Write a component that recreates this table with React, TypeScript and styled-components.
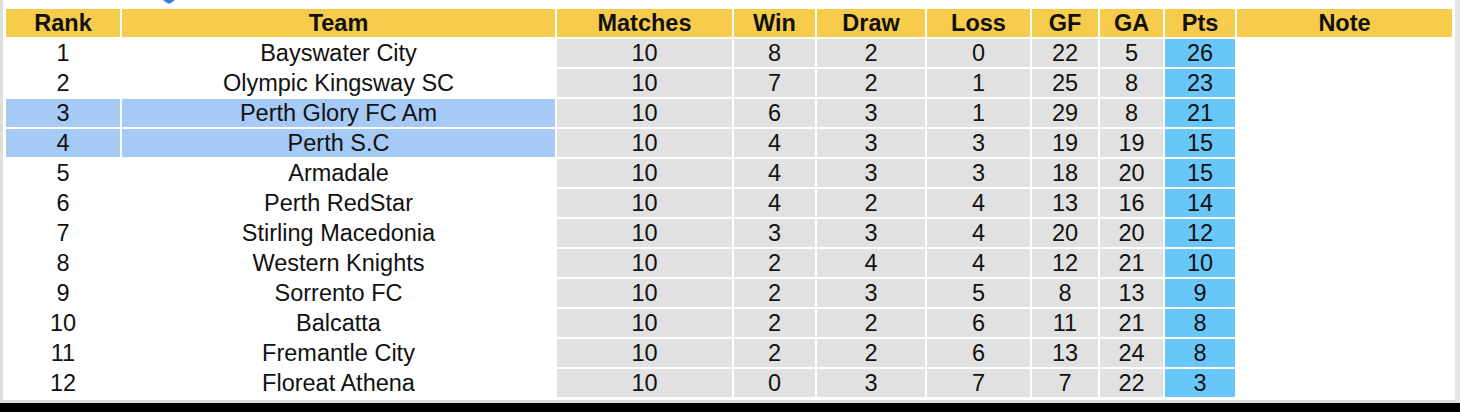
import React from 'react';
import styled, { createGlobalStyle } from 'styled-components';

const GlobalStyle = createGlobalStyle`
  html, body {
    margin: 0;
    padding: 0;
    background: #fff;
  }
  body {
    font-family: 'Liberation Sans', Arial, sans-serif;
    color: #111;
  }
`;

type Tone = 'plain' | 'grey' | 'pick' | 'points' | 'head';

const tones: Record<Tone, string> = {
  plain: '#ffffff',
  grey: '#e1e1e1',
  pick: '#a6c9f6',
  points: '#69c6f8',
  head: '#f7cb4b',
};

const Page = styled.div`
  display: flex;
  flex-direction: column;
  width: 1460px;
  height: 412px;
  overflow: hidden;
`;

const Frame = styled.div`
  display: flex;
  flex-direction: column;
  height: 400px;
  border-left: 3px solid #dedede;
  border-right: 5px solid #e6e6e3;
  border-bottom: 3px solid #dfdfdf;
  padding-left: 3px;
`;

const TopStrip = styled.div`
  height: 9px;
  padding-left: 157px;
  display: flex;
  align-items: flex-start;
`;

const Standings = styled.div`
  display: grid;
  grid-template-columns: 114px 433px 175px 81px 108px 103px 66px 63px 70px 215px;
  grid-auto-rows: 28px;
  gap: 2px;
`;

const Cell = styled.div<{ $tone: Tone; $bold?: boolean }>`
  display: flex;
  align-items: center;
  justify-content: center;
  padding-top: 2px;
  box-sizing: border-box;
  background: ${(p) => tones[p.$tone]};
  font-size: 23.5px;
  font-weight: ${(p) => (p.$bold ? 700 : 400)};
  line-height: 1;
  white-space: nowrap;
`;

const BlackBar = styled.div`
  flex: 1;
  background: #000;
`;

const headers = ['Rank', 'Team', 'Matches', 'Win', 'Draw', 'Loss', 'GF', 'GA', 'Pts', 'Note'];

type Row = [string, number, number, number, number, number, number, number];

const rows: Row[] = [
  ['Bayswater City', 10, 8, 2, 0, 22, 5, 26],
  ['Olympic Kingsway SC', 10, 7, 2, 1, 25, 8, 23],
  ['Perth Glory FC Am', 10, 6, 3, 1, 29, 8, 21],
  ['Perth S.C', 10, 4, 3, 3, 19, 19, 15],
  ['Armadale', 10, 4, 3, 3, 18, 20, 15],
  ['Perth RedStar', 10, 4, 2, 4, 13, 16, 14],
  ['Stirling Macedonia', 10, 3, 3, 4, 20, 20, 12],
  ['Western Knights', 10, 2, 4, 4, 12, 21, 10],
  ['Sorrento FC', 10, 2, 3, 5, 8, 13, 9],
  ['Balcatta', 10, 2, 2, 6, 11, 21, 8],
  ['Fremantle City', 10, 2, 2, 6, 13, 24, 8],
  ['Floreat Athena', 10, 0, 3, 7, 7, 22, 3],
];

const highlighted = new Set([3, 4]);

export default function App() {
  return (
    <Page>
      <GlobalStyle />
      <Frame>
        <TopStrip>
          <svg width="12" height="4" viewBox="0 0 12 4">
            <path d="M0 0 H12 L7.5 3.2 Q6 4 4.5 3.2 Z" fill="#3a7bd5" />
          </svg>
        </TopStrip>
        <Standings>
          {headers.map((h) => (
            <Cell key={h} $tone="head" $bold>
              {h}
            </Cell>
          ))}
          {rows.map((r, i) => {
            const rank = i + 1;
            const side: Tone = highlighted.has(rank) ? 'pick' : 'plain';
            const [team, m, w, d, l, gf, ga, pts] = r;
            return (
              <React.Fragment key={team}>
                <Cell $tone={side}>{rank}</Cell>
                <Cell $tone={side}>{team}</Cell>
                {[m, w, d, l, gf, ga].map((v, j) => (
                  <Cell key={j} $tone="grey">
                    {v}
                  </Cell>
                ))}
                <Cell $tone="points">{pts}</Cell>
                <Cell $tone="plain" />
              </React.Fragment>
            );
          })}
        </Standings>
      </Frame>
      <BlackBar />
    </Page>
  );
}
